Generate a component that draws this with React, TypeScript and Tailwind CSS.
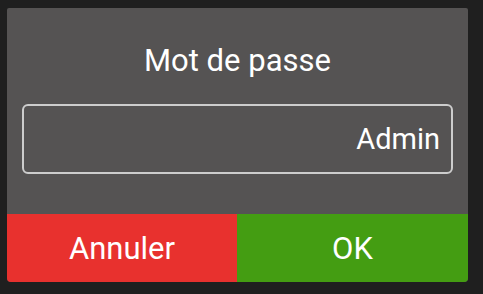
import React from "react";

const App = () => {
  return (
    <div className="w-[483px] h-[294px] bg-[#1f1f1f] pt-[8px] pl-[7px] font-['Roboto',sans-serif]">
      <div className="w-[461px] h-[274px] bg-[#555353] rounded-b-[4px] rounded-t-[2px] overflow-hidden flex flex-col">
        {/* Titre */}
        <div className="h-[96px] flex flex-col items-center">
          <h2 className="mt-[35px] text-[31px] leading-[36px] text-white">Mot de passe</h2>
        </div>

        {/* Champ */}
        <div className="px-[15px]">
          <div className="h-[70px] w-[431px] rounded-[6px] border-2 border-[#cdcdcd] flex items-center justify-end pr-[11px]">
            <span className="text-[29px] text-white leading-[34px]">Admin</span>
          </div>
        </div>

        {/* Boutons */}
        <div className="mt-auto h-[68px] flex">
          <button className="w-[230px] bg-[#e8312e] text-white text-[31px] flex items-center justify-center pt-[2px]">
            Annuler
          </button>
          <button className="flex-1 bg-[#449d12] text-white text-[31px] flex items-center justify-center pt-[2px]">
            OK
          </button>
        </div>
      </div>
    </div>
  );
};

export default App;
